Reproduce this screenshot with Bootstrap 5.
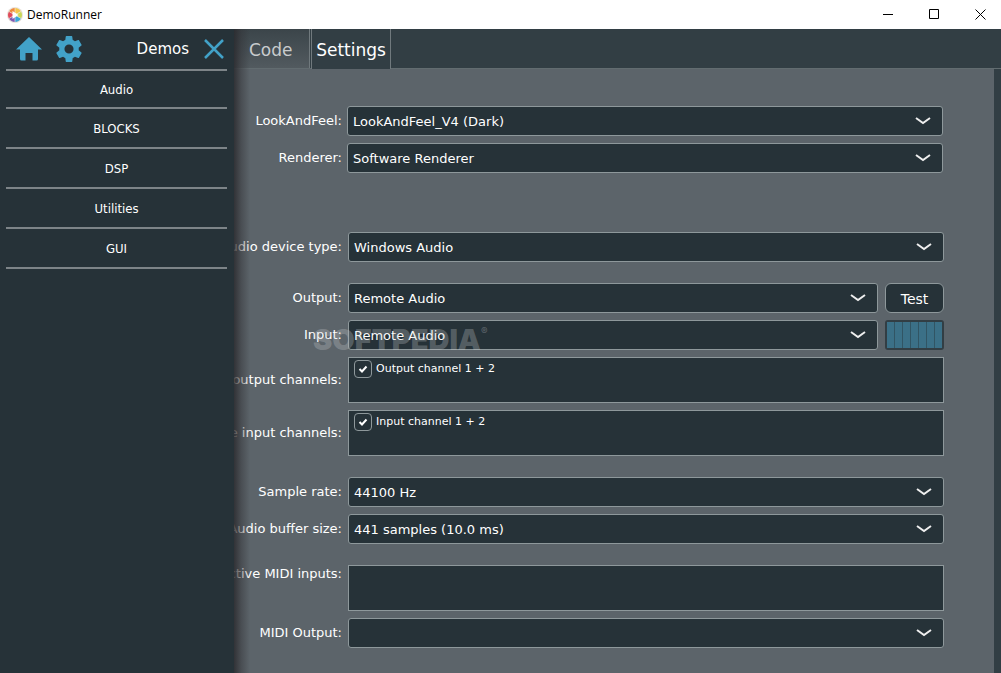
<!DOCTYPE html>
<html lang="en">
<head>
<meta charset="utf-8">
<meta name="viewport" content="width=device-width, initial-scale=1">
<title>DemoRunner</title>
<link href="https://cdn.jsdelivr.net/npm/bootstrap@5.3.0/dist/css/bootstrap.min.css" rel="stylesheet">
<style>
  :root { --widget: #263238; --chrome: #323e44; --panel: #5c646a; --edge: #8e989b; --accent: #42a2c8; }
  body { font: 14px/20px "DejaVu Sans", Verdana, sans-serif; color: #fff; background: var(--panel); }
  .title-bar { height: 29px; background: #fff; color: #000; font: 12px/16px "Open Sans", "Segoe UI", sans-serif; }
  .title-bar button { width: 46px; height: 27px; border: 0; background: none; padding: 0 0 0 4px; line-height: 0; }
  .side-panel { width: 234px; background: var(--widget); z-index: 2; }
  .side-panel::after { content: ""; position: absolute; top: 0; bottom: 0; left: 100%; width: 16px; background: linear-gradient(90deg, rgba(42, 42, 46, .85), rgba(50, 50, 54, .45) 45%, rgba(60, 60, 64, 0)); pointer-events: none; }
  .side-head { height: 40px; padding: 0 10px 0 16px; font-size: 15px; line-height: 22px; }
  .icon-btn { border: 0; background: none; padding: 0; color: var(--accent); line-height: 0; }
  .side-list { margin: 0 7px 0 6px; border-top: 2px solid #7d8488; }
  .side-list a { height: 40px; padding-top: 2px; border-bottom: 2px solid #7d8488; color: #fff; font: 13px/16px "DejaVu Sans Condensed", Tahoma, sans-serif; }
  .side-list li:first-child a { height: 38px; }
  .tab-strip { height: 40px; background: var(--chrome); border-bottom: 1px solid #626c70; font-size: 17px; }
  .tab-strip button { border: 0; color: #fff; padding: 2px 0 0; height: 40px; }
  .tab-strip .tab-back { width: 76px; padding-left: 15px; text-align: left; color: #c8cbcd; background: linear-gradient(#3b454a, #525a5f); border-right: 1px solid #70797d; height: 39px; }
  .tab-strip .tab-front { width: 80px; background: var(--chrome); border: solid #70797d; border-width: 0 1px; margin-left: 1px; }
  .settings { padding: 37px 50px 24px 0; border-right: 7px solid var(--chrome); }
  .field { display: grid; grid-template-columns: 108px minmax(0, 1fr); column-gap: 6px; margin-bottom: 7px; }
  .global .field { column-gap: 5px; margin-right: 1px; }
  .field-label { font-size: 13px; line-height: 18px; display: flex; justify-content: flex-end; align-items: center; overflow: hidden; white-space: nowrap; }
  .combo { height: 30px; padding: 1px 36px 0 5px; font-size: 13px; line-height: 20px; color: #fff; border: 1px solid var(--edge); border-radius: 3px;
    background: var(--widget) url("data:image/svg+xml,%3Csvg xmlns='http://www.w3.org/2000/svg' viewBox='0 0 16 8'%3E%3Cpath d='M1 1 8 6 15 1' fill='none' stroke='%23eee' stroke-width='2'/%3E%3C/svg%3E") no-repeat right 11px center / 16px 8px; }
  .split { gap: 7px; }
  .list-box { height: 46px; background: var(--widget); border: 1px solid var(--edge); padding: 1px 5px; font-size: 11px; }
  .tick { appearance: none; width: 18px; height: 18px; margin: 0; border: 1px solid var(--edge); border-radius: 4px; }
  .tick:checked { background: url("data:image/svg+xml,%3Csvg xmlns='http://www.w3.org/2000/svg' viewBox='0 0 16 16'%3E%3Cpath d='m4.500 8 2.500 2.500 4.500-5' fill='none' stroke='%23fff' stroke-width='2'/%3E%3C/svg%3E") center / 16px; }
  .test-btn, .meter { width: 59px; height: 30px; }
  .test-btn { border: 1px solid var(--edge); border-radius: 6px; background: var(--widget); color: #fff; padding: 1px 0 0; }
  .meter { border: 2px solid var(--chrome); border-radius: 3px; background: #315564; gap: 1px; }
  .meter i { flex: 1; background: #3b7087; }
  .gap-s { margin-bottom: 21px; }
  .gap-l { margin-bottom: 59px; }
  .watermark { left: 79px; top: 0; font: 900 29px/40px Inter, sans-serif; color: rgba(200, 205, 208, .3); pointer-events: none; }
  .watermark sup { font-size: 10px; top: -15px; }
</style>
</head>
<body class="min-vh-100 d-flex flex-column overflow-hidden">
<header class="title-bar d-flex align-items-center flex-shrink-0">
  <svg class="me-1" style="margin-left:7px" width="16" height="16" viewBox="0 0 16 16" aria-hidden="true">
    <circle cx="8" cy="8" r="8" fill="#e8e2dc"/>
    <path d="M8 8V1a7 7 0 0 1 6 3.500z" fill="#f5c64a"/><path d="m8 8 6-3.500a7 7 0 0 1 0 7z" fill="#c9d75a"/><path d="m8 8 6 3.500A7 7 0 0 1 8 15z" fill="#3aa5d8"/><path d="M8 8v7a7 7 0 0 1-6-3.500z" fill="#7f5bb5"/><path d="m8 8-6 3.500a7 7 0 0 1 0-7z" fill="#e04a5a"/><path d="M8 8 2 4.500A7 7 0 0 1 8 1z" fill="#f08a3c"/>
    <path d="M8 1v14M2 4.500l12 7M14 4.500l-12 7" stroke="#f3eee8" stroke-width=".6"/>
    <path d="M5.500 4v8l6-4z" fill="#fff"/>
  </svg>
  <span>DemoRunner</span>
  <div class="ms-auto d-flex">
    <button type="button" aria-label="Minimize"><svg width="11" height="11"><path d="M0 5.500h10" stroke="#000"/></svg></button>
    <button type="button" aria-label="Maximize"><svg width="11" height="11"><path d="M.5.5h9v9h-9z" fill="none" stroke="#000"/></svg></button>
    <button type="button" aria-label="Close"><svg width="11" height="11"><path d="m.5.5 10 10m0-10-10 10" stroke="#000"/></svg></button>
  </div>
</header>
<div class="d-flex flex-grow-1">
  <aside class="side-panel flex-shrink-0 position-relative">
    <div class="side-head d-flex align-items-center">
      <button class="icon-btn" type="button" aria-label="Home"><svg width="26" height="24" viewBox="0 0 26 24"><path d="M13 0 0 12.500h4V22q0 1.500 1.500 1.500H9.500V16h7v7.500h4q1.500 0 1.500-1.500V12.500h4z" fill="currentColor"/></svg></button>
      <button class="icon-btn" style="margin-left:14px" type="button" aria-label="Preferences"><svg width="26" height="26" viewBox="2 2 20 20"><path fill="currentColor" d="M19.430 12.980c.04-.32.07-.64.07-.98s-.03-.66-.07-.98l2.110-1.650c.19-.15.24-.42.12-.64l-2-3.460c-.12-.22-.39-.3-.61-.22l-2.490 1c-.52-.4-1.080-.73-1.690-.98l-.38-2.650A.488.488 0 0 0 14 2h-4c-.25 0-.46.18-.49.42l-.38 2.650c-.61.25-1.170.59-1.690.98l-2.490-1c-.23-.09-.49 0-.61.22l-2 3.460c-.13.22-.07.49.12.64l2.110 1.650c-.04.32-.07.65-.07.98s.03.66.07.98l-2.110 1.650c-.19.15-.24.42-.12.64l2 3.460c.12.22.39.3.61.22l2.490-1c.52.4 1.080.73 1.690.98l.38 2.650c.03.24.24.42.49.42h4c.25 0 .46-.18.49-.42l.38-2.650c.61-.25 1.170-.59 1.690-.98l2.490 1c.23.09.49 0 .61-.22l2-3.460c.12-.22.07-.49-.12-.64zM12 15.500a3.500 3.500 0 1 1 0-7 3.500 3.500 0 0 1 0 7z"/></svg></button>
      <span class="ms-auto" style="margin-right:15px">Demos</span>
      <button class="icon-btn" type="button" aria-label="Close panel"><svg width="20" height="20" viewBox="0 0 20 20"><path d="m1 1 18 18M19 1 1 19" stroke="currentColor" stroke-width="2.500"/></svg></button>
    </div>
    <nav>
      <ul class="side-list list-unstyled">
        <li><a class="d-flex align-items-center justify-content-center text-decoration-none" href="#">Audio</a></li>
        <li><a class="d-flex align-items-center justify-content-center text-decoration-none" href="#">BLOCKS</a></li>
        <li><a class="d-flex align-items-center justify-content-center text-decoration-none" href="#">DSP</a></li>
        <li><a class="d-flex align-items-center justify-content-center text-decoration-none" href="#">Utilities</a></li>
        <li><a class="d-flex align-items-center justify-content-center text-decoration-none" href="#">GUI</a></li>
      </ul>
    </nav>
  </aside>
  <main class="flex-grow-1 d-flex flex-column">
    <div class="tab-strip d-flex" role="tablist">
      <button class="tab-back" type="button" role="tab">Code</button>
      <button class="tab-front" type="button" role="tab" aria-selected="true">Settings</button>
    </div>
    <form class="settings flex-grow-1">
      <div class="global gap-l">
        <div class="field"><label class="field-label" for="laf">LookAndFeel:</label><select class="form-select combo" id="laf"><option>LookAndFeel_V4 (Dark)</option></select></div>
        <div class="field mb-0"><label class="field-label" for="ren">Renderer:</label><select class="form-select combo" id="ren"><option>Software Renderer</option></select></div>
      </div>
      <div class="field gap-s"><label class="field-label" for="dev">Audio device type:</label><select class="form-select combo" id="dev"><option>Windows Audio</option></select></div>
      <div class="field"><label class="field-label" for="out">Output:</label>
        <div class="d-flex split"><select class="form-select combo" id="out"><option>Remote Audio</option></select><button class="test-btn flex-shrink-0" type="button">Test</button></div></div>
      <div class="field position-relative"><label class="field-label" for="inp">Input:</label>
        <div class="d-flex split"><select class="form-select combo" id="inp"><option>Remote Audio</option></select><div class="meter d-flex flex-shrink-0"><i></i><i></i><i></i><i></i><i></i><i></i><i></i></div></div>
        <div class="watermark position-absolute">SOFTPEDIA<sup>®</sup></div></div>
      <div class="field"><span class="field-label">Active output channels:</span>
        <div class="list-box"><label class="d-flex align-items-center gap-1"><input class="tick" type="checkbox" checked><span>Output channel 1 + 2</span></label></div></div>
      <div class="field gap-s"><span class="field-label">Active input channels:</span>
        <div class="list-box"><label class="d-flex align-items-center gap-1"><input class="tick" type="checkbox" checked><span>Input channel 1 + 2</span></label></div></div>
      <div class="field"><label class="field-label" for="rate">Sample rate:</label><select class="form-select combo" id="rate"><option>44100 Hz</option></select></div>
      <div class="field gap-s"><label class="field-label" for="buf">Audio buffer size:</label><select class="form-select combo" id="buf"><option>441 samples (10.0 ms)</option></select></div>
      <div class="field"><span class="field-label align-items-start">Active MIDI inputs:</span><div class="list-box"></div></div>
      <div class="field mb-0"><label class="field-label" for="midi">MIDI Output:</label><select class="form-select combo" id="midi"><option></option></select></div>
    </form>
  </main>
</div>
<script src="https://cdn.jsdelivr.net/npm/bootstrap@5.3.0/dist/js/bootstrap.bundle.min.js"></script>
</body>
</html>
